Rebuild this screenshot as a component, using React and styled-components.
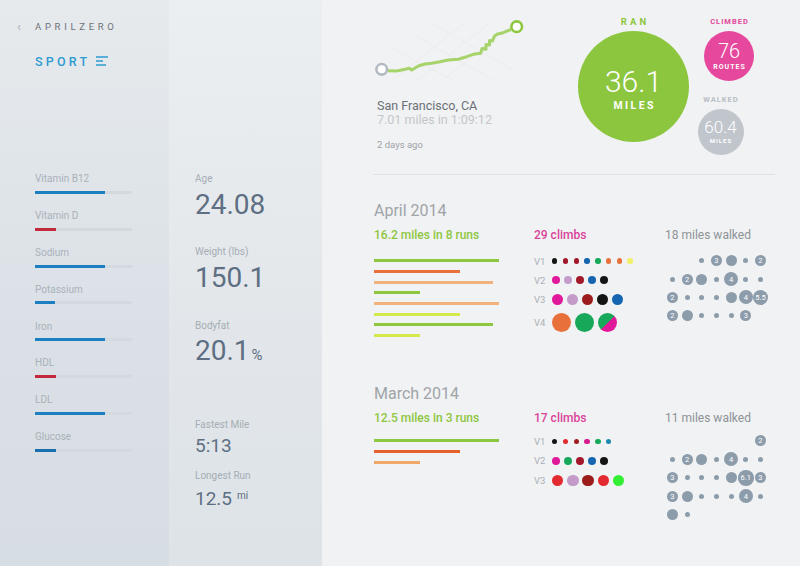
import React from "react";
import styled, { createGlobalStyle } from "styled-components";

const GlobalStyle = createGlobalStyle`
  body {
    margin: 0;
    font-family: Roboto, "Open Sans", sans-serif;
  }
`;

const vitamins = [
  { name: "Vitamin B12", value: 72, color: "#1b7fc1" },
  { name: "Vitamin D", value: 22, color: "#c22a3c" },
  { name: "Sodium", value: 72, color: "#1b7fc1" },
  { name: "Potassium", value: 21, color: "#1b7fc1" },
  { name: "Iron", value: 72, color: "#1b7fc1" },
  { name: "HDL", value: 22, color: "#c22a3c" },
  { name: "LDL", value: 72, color: "#1b7fc1" },
  { name: "Glucose", value: 22, color: "#1a6fae" },
];

const G = "#8dc63f";
const OR = "#e8703a";
const PE = "#f2b27c";
const YG = "#d5e84c";

const BK = "#141414";
const DR = "#a3182a";
const BL = "#1565b0";
const GR = "#17a85a";
const MG = "#e0189a";
const LI = "#c39ac8";
const RD = "#e22a30";

const months = [
  {
    title: "April 2014",
    runs: "16.2 miles in 8 runs",
    climbs: "29 climbs",
    walked: "18 miles walked",
    gap: 10,
    bars: [
      [125, G], [86, OR], [119, PE], [46, G],
      [125, PE], [86, YG], [119, G], [46, YG],
    ],
    grades: [
      { label: "V1", size: 5.4, gap: 5.4, h: 19, dots: [BK, DR, DR, BL, GR, OR, OR, "#f1f06a"] },
      { label: "V2", size: 8, gap: 4.1, h: 19, dots: [MG, LI, DR, BL, BK] },
      { label: "V3", size: 11.4, gap: 3.6, h: 20, dots: [MG, LI, "#9c1c1c", BK, BL] },
      { label: "V4", size: 19, gap: 3.8, h: 25, dots: [OR, GR, "split"] },
    ],
    walks: [
      [null, null, "s", "m3", "m", "s", "m2"],
      ["s", "m2", "m", "s", "l4", "s", "s"],
      ["m2", "s", "s", "s", "m", "l4", "x5.5"],
      ["m2", "m", "s", "s", "s", "m3", null],
    ],
  },
  {
    title: "March 2014",
    runs: "12.5 miles in 3 runs",
    climbs: "17 climbs",
    walked: "11 miles walked",
    gap: 7,
    bars: [[125, G], [86, "#e8602a"], [46, "#f0a868"]],
    grades: [
      { label: "V1", size: 5.4, gap: 5.4, h: 19, dots: [BK, RD, "#a01c20", "#d81b8c", GR, "#1a88b0"] },
      { label: "V2", size: 8, gap: 4.1, h: 20, dots: [MG, GR, DR, BL, BK] },
      { label: "V3", size: 11.4, gap: 3.8, h: 20, dots: [RD, LI, "#9c1c1c", RD, "#33ee33"] },
    ],
    walks: [
      [null, null, null, null, null, null, "m2"],
      ["s", "m2", "m", "s", "l4", "s", "s"],
      ["m3", "s", "s", "s", "m", "x6.1", "m3"],
      ["m3", "m", "s", "s", "s", "l4", "s"],
      ["m", "s"],
    ],
  },
];

const walkSizes = { s: 5, m: 11, l: 14, x: 15.5 };

function Month({ data }) {
  return (
    <Section>
      <MonthTitle>{data.title}</MonthTitle>
      <Columns>
        <div>
          <Summary color={G} weight={500}>{data.runs}</Summary>
          <Bars offset={data.gap + 7.7}>
            {data.bars.map(([w, c], i) => (
              <Bar key={i} style={{ width: w }} color={c} />
            ))}
          </Bars>
        </div>
        <div>
          <Summary color="#d9449b" weight={500}>{data.climbs}</Summary>
          <Grades offset={data.gap}>
            {data.grades.map((g) => (
              <GradeRow key={g.label} h={g.h}>
                <GradeLabel>{g.label}</GradeLabel>
                <Dots gap={g.gap}>
                  {g.dots.map((c, i) => (
                    <ClimbDot key={i} size={g.size} color={c} />
                  ))}
                </Dots>
              </GradeRow>
            ))}
          </Grades>
        </div>
        <div>
          <Summary color="#8e9398" weight={400}>{data.walked}</Summary>
          <WalkGrid offset={data.gap}>
            {data.walks.flatMap((row, r) =>
              Array.from({ length: 7 }).map((_, c) => {
                const w = row[c];
                return (
                  <WalkCell key={r + "-" + c}>
                    {w && (
                      <WalkDot size={walkSizes[w[0]]}>{w.slice(1)}</WalkDot>
                    )}
                  </WalkCell>
                );
              })
            )}
          </WalkGrid>
        </div>
      </Columns>
    </Section>
  );
}

export default function App() {
  return (
    <>
      <GlobalStyle />
      <Page>
        <Sidebar>
          <Brand>
            <Back>‹</Back>
            APRILZERO
          </Brand>
          <SportNav>
            SPORT
            <svg width="12" height="10" viewBox="0 0 12 10">
              <path d="M0 1h12M0 5h7M0 9h10" stroke="#2d9ad0" strokeWidth="1.4" />
            </svg>
          </SportNav>
          <VitaminList>
            {vitamins.map((v) => (
              <Vitamin key={v.name}>
                <VitaminName>{v.name}</VitaminName>
                <Track>
                  <Fill color={v.color} style={{ width: v.value + "%" }} />
                </Track>
              </Vitamin>
            ))}
          </VitaminList>
        </Sidebar>

        <Stats>
          <StatGroup>
            <Stat>
              <StatLabel>Age</StatLabel>
              <BigValue>24.08</BigValue>
            </Stat>
            <Stat>
              <StatLabel>Weight (lbs)</StatLabel>
              <BigValue>150.1</BigValue>
            </Stat>
            <Stat>
              <StatLabel>Bodyfat</StatLabel>
              <BigValue>
                20.1<Unit big>%</Unit>
              </BigValue>
            </Stat>
          </StatGroup>
          <StatGroup small>
            <Stat>
              <StatLabel>Fastest Mile</StatLabel>
              <SmallValue>5:13</SmallValue>
            </Stat>
            <Stat>
              <StatLabel>Longest Run</StatLabel>
              <SmallValue>
                12.5<Unit>mi</Unit>
              </SmallValue>
            </Stat>
          </StatGroup>
        </Stats>

        <Main>
          <TopRow>
            <LastRun>
              <svg width="155" height="66" viewBox="0 0 155 66">
                <g stroke="#ebeced" strokeWidth="1" fill="none">
                  <path d="M20 66L90 10M45 66L115 10M70 66L140 10" />
                  <path d="M40 20L120 66M60 10L140 56M20 35L80 66" />
                </g>
                <polyline
                  points="15,56.7 23.7,57 32,55.3 36.3,54.3 38.7,56 45.3,52 52,50 58.7,49.3 67,47.7 75.3,46 85.3,45.3 93.7,42.7 100.3,40.3 107.7,39.3 109,34.5 113,35.3 113,30.5 116.5,31 116.5,26.5 119.5,27 121.5,22 124.5,20 130.3,18.7 138,15.5"
                  fill="none"
                  stroke="#a6d46a"
                  strokeWidth="3"
                  strokeLinejoin="round"
                />
                <circle cx="8.7" cy="55.3" r="5.3" fill="#fff" stroke="#b3bac3" strokeWidth="2.6" />
                <circle cx="143.7" cy="12.7" r="5.3" fill="#fff" stroke="#8dc63f" strokeWidth="2.6" />
              </svg>
              <Place>San Francisco, CA</Place>
              <RunMeta>7.01 miles in 1:09:12</RunMeta>
              <Ago>2 days ago</Ago>
            </LastRun>
            <Bubble>
              <BubbleLabel color={G} size={9.5} spacing={3.2}>RAN</BubbleLabel>
              <Circle size={111} color="#8cc63f" lift={4}>
                <CircleNum size={30} lh={33}>36.1</CircleNum>
                <CircleUnit size={10.5} spacing={2.4} lh={12} top={1.5}>MILES</CircleUnit>
              </Circle>
            </Bubble>
            <SmallBubbles>
              <Bubble shift={6.5}>
                <BubbleLabel color="#e0489a" size={7.5} spacing={1}>CLIMBED</BubbleLabel>
                <Circle size={50} color="#e5489c" lift={0}>
                  <CircleNum size={20} lh={22}>76</CircleNum>
                  <CircleUnit size={7} spacing={1} lh={9} top={0.5}>ROUTES</CircleUnit>
                </Circle>
              </Bubble>
              <Bubble shift={0} top={12.5}>
                <BubbleLabel color="#b8bec4" size={7.5} spacing={1}>WALKED</BubbleLabel>
                <Circle size={46} color="#c1c5cc" lift={-2}>
                  <CircleNum size={17} lh={20}>60.4</CircleNum>
                  <CircleUnit size={6} spacing={1} lh={8} top={0}>MILES</CircleUnit>
                </Circle>
              </Bubble>
            </SmallBubbles>
          </TopRow>
          {months.map((m) => (
            <Month key={m.title} data={m} />
          ))}
        </Main>
      </Page>
    </>
  );
}

const Page = styled.div`
  display: flex;
  width: 800px;
  height: 566px;
  overflow: hidden;
  font-family: Roboto, "Open Sans", sans-serif;
`;

const Sidebar = styled.aside`
  width: 169px;
  flex-shrink: 0;
  box-sizing: border-box;
  padding: 20px 0 0 35px;
  background: linear-gradient(180deg, #e6eaed 0%, #dae0e6 60%, #d6dde3 100%);
`;

const Brand = styled.div`
  display: flex;
  align-items: center;
  height: 12px;
  font-size: 9.5px;
  letter-spacing: 3.7px;
  color: #6d7379;
`;

const Back = styled.span`
  width: 18px;
  margin-left: -18px;
  font-size: 13px;
  color: #a9afb5;
  letter-spacing: 0;
`;

const SportNav = styled.div`
  display: flex;
  align-items: center;
  gap: 6px;
  margin-top: 21px;
  height: 16px;
  font-size: 12.5px;
  font-weight: 500;
  letter-spacing: 3.2px;
  color: #2d9ad0;
`;

const VitaminList = styled.div`
  display: flex;
  flex-direction: column;
  gap: 16.1px;
  margin-top: 104px;
`;

const Vitamin = styled.div`
  display: flex;
  flex-direction: column;
  gap: 5.8px;
`;

const VitaminName = styled.div`
  font-size: 10px;
  line-height: 12px;
  color: #a9b2ba;
`;

const Track = styled.div`
  width: 97px;
  height: 3px;
  background: #d2d9df;
`;

const Fill = styled.div`
  height: 100%;
  background: ${(p) => p.color};
`;

const Stats = styled.section`
  width: 153px;
  flex-shrink: 0;
  box-sizing: border-box;
  padding: 173px 0 0 26px;
  background: linear-gradient(180deg, #eceff1 0%, #e2e6ea 60%, #dde3e7 100%);
  display: flex;
  flex-direction: column;
  gap: 48px;
`;

const StatGroup = styled.div`
  display: flex;
  flex-direction: column;
  gap: ${(p) => (p.small ? "13.3px" : "25.8px")};
`;

const Stat = styled.div`
  display: flex;
  flex-direction: column;
  gap: 3.5px;
`;

const StatLabel = styled.div`
  font-size: 10px;
  line-height: 12px;
  color: #a5adb5;
`;

const BigValue = styled.div`
  font-size: 28px;
  line-height: 32px;
  color: #5e6f83;
`;

const SmallValue = styled.div`
  font-size: 19px;
  line-height: 22px;
  color: #5e6f83;
`;

const Unit = styled.span`
  font-size: ${(p) => (p.big ? "15px" : "10px")};
  margin-left: ${(p) => (p.big ? "2px" : "5px")};
  vertical-align: ${(p) => (p.big ? "baseline" : "6px")};
`;

const Main = styled.main`
  flex: 1;
  box-sizing: border-box;
  padding: 0 25px 0 51px;
  background: #f1f2f3;
`;

const TopRow = styled.div`
  display: flex;
  align-items: flex-start;
  height: 174px;
  border-bottom: 1px solid #e0e2e4;
`;

const LastRun = styled.div`
  width: 205px;
  flex-shrink: 0;
  padding-top: 14px;
  svg {
    display: block;
  }
`;

const Place = styled.div`
  margin: 19px 0 0 4px;
  font-size: 12.5px;
  line-height: 14px;
  color: #6a7077;
`;

const RunMeta = styled.div`
  margin-left: 4px;
  font-size: 12.5px;
  line-height: 14px;
  color: #c3c7cb;
`;

const Ago = styled.div`
  margin: 12px 0 0 4px;
  font-size: 9.5px;
  line-height: 12px;
  color: #9ea3a8;
`;

const SmallBubbles = styled.div`
  display: flex;
  flex-direction: column;
  align-items: flex-start;
  margin-left: 8.5px;
`;

const Bubble = styled.div`
  display: flex;
  flex-direction: column;
  align-items: center;
  margin-left: ${(p) => p.shift || 0}px;
  margin-top: ${(p) => p.top || 0}px;
  padding-top: ${(p) => (p.top ? 0 : 16)}px;
`;

const BubbleLabel = styled.div`
  font-size: ${(p) => p.size}px;
  line-height: 12px;
  font-weight: 700;
  letter-spacing: ${(p) => p.spacing}px;
  margin-right: -${(p) => p.spacing}px;
  color: ${(p) => p.color};
  margin-bottom: 3px;
`;

const Circle = styled.div`
  width: ${(p) => p.size}px;
  height: ${(p) => p.size}px;
  border-radius: 50%;
  background: ${(p) => p.color};
  color: #fff;
  display: flex;
  flex-direction: column;
  align-items: center;
  justify-content: center;
  box-sizing: border-box;
  padding-top: ${(p) => Math.max(p.lift, 0)}px;
  padding-bottom: ${(p) => Math.max(-p.lift, 0)}px;
`;

const CircleNum = styled.div`
  font-size: ${(p) => p.size}px;
  line-height: ${(p) => p.lh}px;
  font-weight: 300;
`;

const CircleUnit = styled.div`
  font-size: ${(p) => p.size}px;
  line-height: ${(p) => p.lh}px;
  font-weight: 700;
  margin-top: ${(p) => p.top}px;
  letter-spacing: ${(p) => p.spacing}px;
  margin-right: -${(p) => p.spacing}px;
`;

const Section = styled.section`
  min-height: 183.3px;
  padding-top: 26px;
  & + & {
    padding-top: 0;
  }
`;

const MonthTitle = styled.h2`
  margin: 0 0 0 1px;
  font-size: 16px;
  line-height: 20px;
  font-weight: 400;
  color: #9fa4a9;
`;

const Columns = styled.div`
  display: grid;
  grid-template-columns: 160px 131px 1fr;
  margin-top: 6.5px;
  padding-left: 1px;
`;

const Summary = styled.div`
  font-size: 12px;
  line-height: 14px;
  font-weight: ${(p) => p.weight};
  color: ${(p) => p.color};
`;

const Bars = styled.div`
  display: flex;
  flex-direction: column;
  gap: 7.7px;
  margin-top: ${(p) => p.offset}px;
`;

const Bar = styled.div`
  height: 3px;
  background: ${(p) => p.color};
`;

const Grades = styled.div`
  margin-top: ${(p) => p.offset}px;
`;

const GradeRow = styled.div`
  display: flex;
  align-items: center;
  height: ${(p) => p.h}px;
`;

const GradeLabel = styled.span`
  width: 18px;
  font-size: 9.5px;
  color: #aab0b6;
`;

const Dots = styled.div`
  display: flex;
  align-items: center;
  gap: ${(p) => p.gap}px;
`;

const ClimbDot = styled.span`
  width: ${(p) => p.size}px;
  height: ${(p) => p.size}px;
  border-radius: 50%;
  background: ${(p) =>
    p.color === "split"
      ? `linear-gradient(135deg, ${GR} 52%, ${MG} 52%)`
      : p.color};
`;

const WalkGrid = styled.div`
  display: grid;
  grid-template-columns: repeat(7, 14.7px);
  grid-auto-rows: 18.4px;
  margin-top: ${(p) => p.offset}px;
`;

const WalkCell = styled.div`
  display: flex;
  align-items: center;
  justify-content: center;
`;

const WalkDot = styled.span`
  flex-shrink: 0;
  width: ${(p) => p.size}px;
  height: ${(p) => p.size}px;
  border-radius: 50%;
  background: #8c9cab;
  color: #fff;
  font-size: 7.5px;
  display: flex;
  align-items: center;
  justify-content: center;
`;
